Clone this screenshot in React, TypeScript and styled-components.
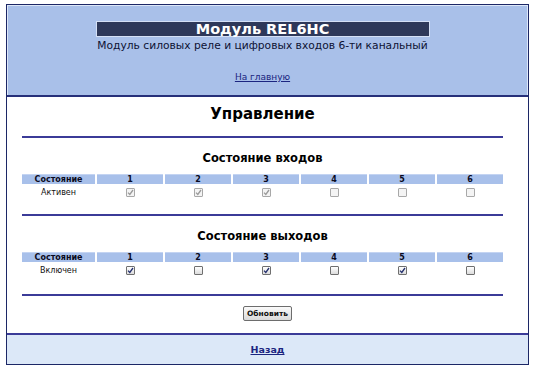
import React from 'react';
import styled, { createGlobalStyle } from 'styled-components';

const GlobalStyle = createGlobalStyle`
  html, body {
    margin: 0;
    padding: 0;
    background: #ffffff;
    font-family: "DejaVu Sans", Verdana, sans-serif;
  }
`;

const Frame = styled.div`
  box-sizing: border-box;
  width: 523px;
  height: 361px;
  margin: 4px 0 0 6px;
  border: 1px solid #1c2766;
  display: flex;
  flex-direction: column;
  background: #ffffff;
`;

const Header = styled.header`
  box-sizing: border-box;
  height: 92px;
  padding: 16px 25px 0 15px;
  background: #a9c0e9;
  box-shadow: inset 1px 1px 0 #dde7f8, inset -1px 0 0 #dde7f8;
  border-bottom: 2px solid #26307a;
  text-align: center;
`;

const TitleBar = styled.div`
  box-sizing: border-box;
  width: 334px;
  height: 16px;
  margin: 0 auto;
  background: #2e3859;
  border: 1px solid #d5e0f5;
  color: #ffffff;
  font-weight: bold;
  font-size: 14.5px;
  line-height: 14px;
`;

const Subtitle = styled.div`
  margin-top: 2px;
  font-size: 10.7px;
  line-height: 14px;
  color: #0d1233;
`;

const HeaderLink = styled.a`
  display: inline-block;
  margin-top: 17px;
  font-size: 9px;
  line-height: 14px;
  color: #1b2580;
  text-decoration: underline;
`;

const Main = styled.main`
  flex: 1;
  display: flex;
  flex-direction: column;
`;

const Content = styled.div`
  padding: 0 25px 0 15px;
  text-align: center;
`;

const PageTitle = styled.h1`
  margin: 7px 0 0;
  font-size: 15px;
  line-height: 20px;
  font-weight: bold;
  color: #000;
`;

const Rule = styled.hr<{ $top: number }>`
  margin: ${(p) => p.$top}px 0 0;
  height: 2px;
  border: none;
  background: #3b3b98;
`;

const SectionTitle = styled.h2`
  margin: 12px 0 0;
  font-size: 11.5px;
  line-height: 16px;
  font-weight: bold;
  color: #000;
`;

const Grid = styled.div`
  display: grid;
  grid-template-columns: 73px repeat(6, 1fr);
  column-gap: 2px;
  margin-top: 8px;
`;

const HeadCell = styled.div`
  height: 10px;
  background: #a8c0ea;
  border-top: 1px solid #c4d4f2;
  box-sizing: border-box;
  font-size: 8px;
  font-weight: bold;
  line-height: 9px;
  color: #0a0a20;
`;

const DataCell = styled.div`
  height: 17px;
  display: flex;
  align-items: center;
  justify-content: center;
  font-size: 8px;
  color: #111;
`;

const Box = styled.span<{ $disabled?: boolean }>`
  box-sizing: border-box;
  width: 9px;
  height: 9px;
  border: 1px solid ${(p) => (p.$disabled ? '#a8a8a8' : '#6f6f6f')};
  border-radius: 1px;
  background: ${(p) => (p.$disabled ? '#f4f4f4' : 'linear-gradient(#ffffff, #dcdcdc)')};
  display: flex;
  align-items: center;
  justify-content: center;
`;

const ButtonRow = styled.div`
  display: flex;
  justify-content: center;
  margin-top: 10px;
`;

const Button = styled.button`
  box-sizing: border-box;
  width: 49px;
  height: 15px;
  padding: 0;
  border: 1px solid #6d6d6d;
  border-radius: 2px;
  background: linear-gradient(#fafafa, #dadada);
  font-family: "DejaVu Sans", Verdana, sans-serif;
  font-size: 7.5px;
  font-weight: bold;
  color: #111;
`;

const Footer = styled.footer`
  box-sizing: border-box;
  height: 31px;
  border-top: 2px solid #3b3b98;
  background: #dce8f8;
  text-align: center;
  padding-top: 3px;
`;

const FooterLink = styled.a`
  font-size: 9.5px;
  font-weight: bold;
  line-height: 14px;
  color: #1b2580;
  text-decoration: underline;
`;

const Check: React.FC<{ checked: boolean; disabled?: boolean }> = ({ checked, disabled }) => (
  <Box $disabled={disabled}>
    {checked && (
      <svg width="7" height="7" viewBox="0 0 7 7">
        <path
          d="M1 3.6 L2.8 5.5 L6 1"
          fill="none"
          stroke={disabled ? '#9a9a9a' : '#24306e'}
          strokeWidth="1.3"
        />
      </svg>
    )}
  </Box>
);

const StateTable: React.FC<{ label: string; values: boolean[]; disabled?: boolean }> = ({
  label,
  values,
  disabled,
}) => (
  <Grid>
    <HeadCell>Состояние</HeadCell>
    {values.map((_, i) => (
      <HeadCell key={i}>{i + 1}</HeadCell>
    ))}
    <DataCell>{label}</DataCell>
    {values.map((v, i) => (
      <DataCell key={i}>
        <Check checked={v} disabled={disabled} />
      </DataCell>
    ))}
  </Grid>
);

const App: React.FC = () => {
  const inputs = [true, true, true, false, false, false];
  const outputs = [true, false, true, false, true, false];

  return (
    <>
      <GlobalStyle />
      <Frame>
        <Header>
          <TitleBar>Модуль REL6HC</TitleBar>
          <Subtitle>Модуль силовых реле и цифровых входов 6-ти канальный</Subtitle>
          <HeaderLink href="#">На главную</HeaderLink>
        </Header>
        <Main>
          <Content>
            <PageTitle>Управление</PageTitle>
            <Rule $top={12} />
            <SectionTitle>Состояние входов</SectionTitle>
            <StateTable label="Активен" values={inputs} disabled />
            <Rule $top={13} />
            <SectionTitle>Состояние выходов</SectionTitle>
            <StateTable label="Включен" values={outputs} />
            <Rule $top={15} />
          </Content>
          <ButtonRow>
            <Button>Обновить</Button>
          </ButtonRow>
        </Main>
        <Footer>
          <FooterLink href="#">Назад</FooterLink>
        </Footer>
      </Frame>
    </>
  );
};

export default App;
